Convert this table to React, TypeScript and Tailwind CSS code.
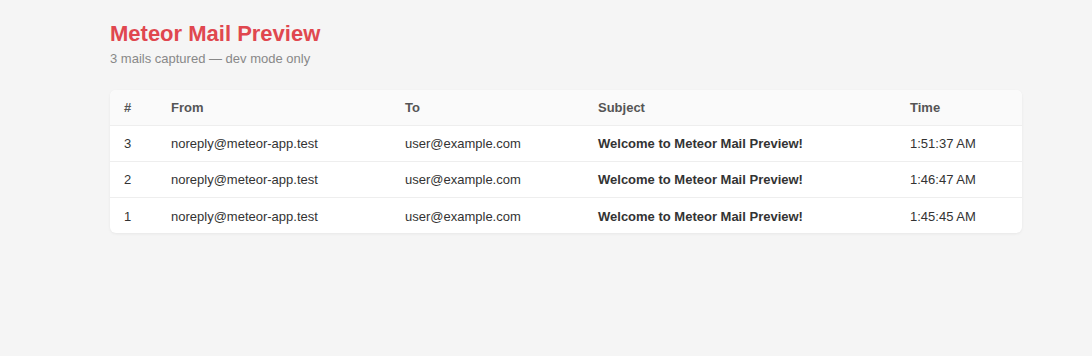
const mails = [
  { id: 3, from: 'noreply@meteor-app.test', to: 'user@example.com', subject: 'Welcome to Meteor Mail Preview!', time: '1:51:37 AM' },
  { id: 2, from: 'noreply@meteor-app.test', to: 'user@example.com', subject: 'Welcome to Meteor Mail Preview!', time: '1:46:47 AM' },
  { id: 1, from: 'noreply@meteor-app.test', to: 'user@example.com', subject: 'Welcome to Meteor Mail Preview!', time: '1:45:45 AM' },
];

const App = () => {
  return (
    <div className="min-h-[356px] bg-[#f5f5f5] pl-[110px] pr-[70px] pt-[20px] font-['Liberation_Sans',Arial,sans-serif]">
      <h1 className="text-[22px] font-bold leading-[28px] text-[#e0474f]">Meteor Mail Preview</h1>
      <p className="mt-[2px] text-[13px] leading-[18px] text-[#888]">3 mails captured — dev mode only</p>

      <div className="mt-[22px] overflow-hidden rounded-md bg-white shadow-[0_1px_3px_rgba(0,0,0,0.06)]">
        <table className="w-full border-collapse text-left text-[13px]">
          <thead>
            <tr className="h-[35px] bg-[#fafafa] text-[#555]">
              <th className="w-[47px] pl-[14px] font-bold">#</th>
              <th className="w-[234px] pl-[14px] font-bold">From</th>
              <th className="w-[193px] pl-[14px] font-bold">To</th>
              <th className="w-[312px] pl-[14px] font-bold">Subject</th>
              <th className="pl-[14px] font-bold">Time</th>
            </tr>
          </thead>
          <tbody className="text-[#333]">
            {mails.map((mail) => (
              <tr key={mail.id} className="h-[36px] border-t border-[#eee]">
                <td className="pl-[14px] pt-[2px]">{mail.id}</td>
                <td className="pl-[14px] pt-[2px]">{mail.from}</td>
                <td className="pl-[14px] pt-[2px]">{mail.to}</td>
                <td className="pl-[14px] pt-[2px] font-bold">{mail.subject}</td>
                <td className="pl-[14px] pt-[2px]">{mail.time}</td>
              </tr>
            ))}
          </tbody>
        </table>
      </div>
    </div>
  );
};

export default App;
